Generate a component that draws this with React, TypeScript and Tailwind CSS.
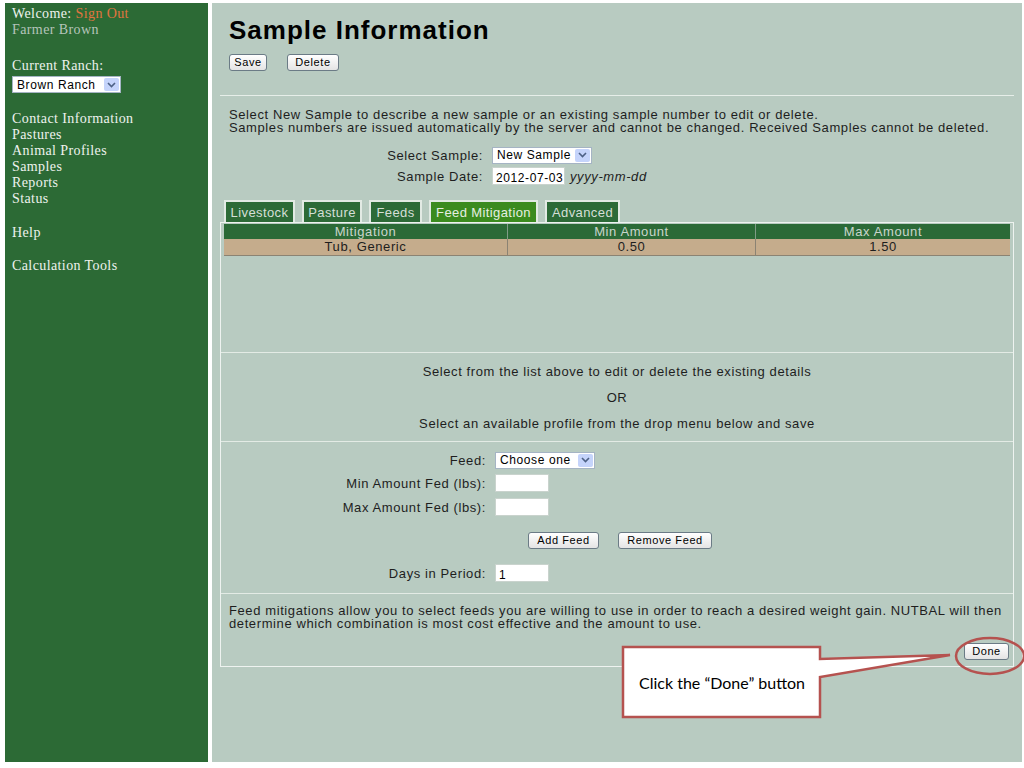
// Sample Information page (NUTBAL-style rancher portal)

function Btn({ label, w }: { label: string; w: string }) {
  return (
    <button
      className={`h-[17px] ${w} rounded-[3px] border border-[#6b7b86] bg-linear-to-b from-white to-[#e4e4e4] text-[11px] leading-[15px] tracking-[0.6px] text-black`}
    >
      {label}
    </button>
  );
}

function Select({ label, w }: { label: string; w: string }) {
  return (
    <div
      className={`flex h-[17px] ${w} items-center justify-between whitespace-nowrap border border-[#a5b4c4] bg-white pl-[4px] pr-[1px] text-[12px] leading-none tracking-[0.6px] text-black`}
    >
      <span>{label}</span>
      <span className="flex h-[13px] w-[15px] items-center justify-center rounded-[2px] bg-[#c5d4fb]">
        <svg width="9" height="6" viewBox="0 0 9 6">
          <path d="M1 1 L4.5 4.5 L8 1" fill="none" stroke="#4d6185" strokeWidth="1.6" />
        </svg>
      </span>
    </div>
  );
}

function TextBox({ value = "", w = "w-[54px]" }: { value?: string; w?: string }) {
  return (
    <div className={`h-[18px] ${w} whitespace-nowrap border border-[#c9d3cd] bg-white pl-[3px] pt-[3px] text-[12px] leading-[14px] text-black`}>
      {value}
    </div>
  );
}

function Row({ label, children, lw = "w-[272px]" }: { label: string; children: React.ReactNode; lw?: string }) {
  return (
    <div className="flex h-[18px] items-center">
      <div className={`${lw} whitespace-nowrap pr-[9px] text-right`}>{label}</div>
      {children}
    </div>
  );
}

const tabs = [
  { name: "Livestock", w: "w-[71px]" },
  { name: "Pasture", w: "w-[60px]" },
  { name: "Feeds", w: "w-[53px]" },
  { name: "Feed Mitigation", w: "w-[109px]", active: true },
  { name: "Advanced", w: "w-[75px]" },
];

const menu = ["Contact Information", "Pastures", "Animal Profiles", "Samples", "Reports", "Status"];

export default function App() {
  return (
    <div className="relative h-[768px] w-[1024px] overflow-hidden bg-white">
      <div className="flex gap-[4px] pl-[5px] pt-[3px]">
        {/* sidebar */}
        <aside className="h-[759px] w-[203px] bg-[#2c6a35] pl-[7px] pt-[3px] font-['Liberation_Serif','Times_New_Roman',serif] text-[14px] leading-[16px] tracking-[0.4px] text-[#eef2ee]">
          <div>
            Welcome: <span className="text-[#e0743f]">Sign Out</span>
          </div>
          <div className="text-[#b5c4ba]">Farmer Brown</div>
          <div className="mt-[20px]">Current Ranch:</div>
          <div className="mt-[2px] font-['Liberation_Sans',Arial,sans-serif]">
            <Select label="Brown Ranch" w="w-[109px]" />
          </div>
          <div className="mt-[18px]">
            {menu.map((m) => (
              <div key={m}>{m}</div>
            ))}
          </div>
          <div className="mt-[18px]">Help</div>
          <div className="mt-[17px]">Calculation Tools</div>
        </aside>

        {/* main */}
        <main className="h-[759px] w-[810px] bg-[#b8cbc1] px-[8px] pt-[13px] font-['Liberation_Sans',Arial,sans-serif] text-[13px] leading-[13px] tracking-[0.6px] text-[#1e1e1e]">
          <h1 className="pl-[9px] text-[26px] font-bold leading-[28px] tracking-[1px] text-black">Sample Information</h1>
          <div className="mt-[10px] flex gap-[20px] pl-[9px]">
            <Btn label="Save" w="w-[38px]" />
            <Btn label="Delete" w="w-[52px]" />
          </div>

          <div className="mt-[24px] border-t border-[#e6eee9]" />

          <p className="mt-[12px] pl-[9px]">
            Select New Sample to describe a new sample or an existing sample number to edit or delete.
            <br />
            Samples numbers are issued automatically by the server and cannot be changed. Received Samples cannot be deleted.
          </p>

          <div className="mt-[12px] flex flex-col gap-[3px]">
            <Row label="Select Sample:">
              <Select label="New Sample" w="w-[100px]" />
            </Row>
            <Row label="Sample Date:">
              <TextBox value="2012-07-03" w="w-[73px]" />
              <span className="ml-[5px] italic">yyyy-mm-dd</span>
            </Row>
          </div>

          {/* tabs */}
          <div className="mt-[15px] flex gap-[7px] pl-[4px]">
            {tabs.map((t) => (
              <div
                key={t.name}
                className={`flex h-[22px] ${t.w} items-center justify-center whitespace-nowrap border-x-2 border-t-2 border-[#e2eae4] text-[13px] tracking-[0.4px] ${
                  t.active ? "bg-[#3b8b1f] text-[#e6efe2]" : "bg-[#2c6a37] text-[#d5dfd7]"
                }`}
              >
                {t.name}
              </div>
            ))}
          </div>

          {/* panel */}
          <section className="h-[445px] border border-[#eef3f0] px-[3px] pt-[1px]">
            <div className="grid grid-cols-[283px_248px_1fr] text-center">
              <div className="h-[15px] bg-[#2b6a37] leading-[15px] text-[#c9d5cc]">Mitigation</div>
              <div className="h-[15px] border-l border-[#7f9c86] bg-[#2b6a37] leading-[15px] text-[#c9d5cc]">Min Amount</div>
              <div className="h-[15px] border-l border-[#7f9c86] bg-[#2b6a37] leading-[15px] text-[#c9d5cc]">Max Amount</div>
              <div className="h-[17px] border-b border-[#8b8373] bg-[#c5ac8c] leading-[16px]">Tub, Generic</div>
              <div className="h-[17px] border-b border-l border-[#8b8373] bg-[#c5ac8c] leading-[16px]">0.50</div>
              <div className="h-[17px] border-b border-l border-[#8b8373] bg-[#c5ac8c] leading-[16px]">1.50</div>
            </div>

            <div className="mx-[-3px] mt-[96px] border-t border-[#e3ebe5]" />
            <div className="flex flex-col items-center gap-[13px] pt-[12px] pb-[11px]">
              <div>Select from the list above to edit or delete the existing details</div>
              <div>OR</div>
              <div>Select an available profile from the drop menu below and save</div>
            </div>
            <div className="mx-[-3px] border-t border-[#e3ebe5]" />

            <div className="flex flex-col pt-[9px]">
              <Row label="Feed:" lw="w-[271px]">
                <Select label="Choose one" w="w-[100px]" />
              </Row>
              <div className="mt-[5px] flex flex-col gap-[6px]">
                <Row label="Min Amount Fed (lbs):" lw="w-[271px]">
                  <TextBox />
                </Row>
                <Row label="Max Amount Fed (lbs):" lw="w-[271px]">
                  <TextBox />
                </Row>
              </div>
              <div className="mt-[16px] flex gap-[19px] pl-[304px]">
                <Btn label="Add Feed" w="w-[71px]" />
                <Btn label="Remove Feed" w="w-[94px]" />
              </div>
              <div className="mt-[15px]">
                <Row label="Days in Period:" lw="w-[271px]">
                  <TextBox value="1" />
                </Row>
              </div>
            </div>

            <div className="mx-[-3px] mt-[11px] border-t border-[#e3ebe5]" />
            <p className="pl-[5px] pt-[10px]">
              Feed mitigations allow you to select feeds you are willing to use in order to reach a desired weight gain. NUTBAL will then
              <br />
              determine which combination is most cost effective and the amount to use.
            </p>
            <div className="mt-[13px] flex justify-end pr-[1px]">
              <Btn label="Done" w="w-[45px]" />
            </div>
          </section>
        </main>
      </div>

      {/* tutorial callout */}
      <svg className="pointer-events-none absolute left-0 top-0" width="1024" height="768" viewBox="0 0 1024 768">
        <path
          d="M623 647 L820 647 L820 659 L950 655 L820 677 L820 717 L623 717 Z"
          fill="white"
          stroke="#b5524f"
          strokeWidth="2.5"
          strokeLinejoin="miter"
        />
        <ellipse cx="990" cy="656" rx="34" ry="18" fill="none" stroke="#b5524f" strokeWidth="2.5" />
      </svg>
      <div className="absolute left-[639px] top-[673px] font-['Lato','Open_Sans',sans-serif] text-[16px] leading-[20px] text-black">
        Click the “Done” button
      </div>
    </div>
  );
}
